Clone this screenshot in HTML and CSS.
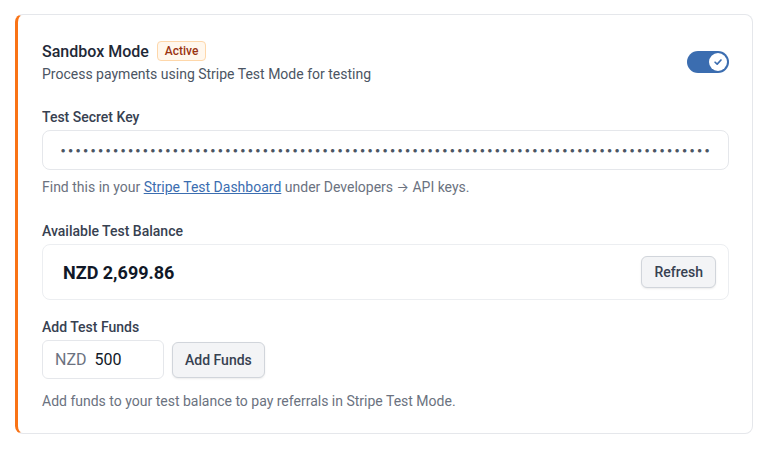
FILE: index.html
```html
<!DOCTYPE html>
<html lang="en">
<head>
    <meta charset="UTF-8">
    <meta name="viewport" content="width=device-width, initial-scale=1.0">
    <title>Sandbox Mode</title>
    <link rel="stylesheet" href="styles.css">
</head>
<body>
    <div class="card">
        <div class="head">
            <div>
                <div class="title-row">
                    <span class="title">Sandbox Mode</span>
                    <span class="badge">Active</span>
                </div>
                <p class="sub">Process payments using Stripe Test Mode for testing</p>
            </div>
            <label class="toggle">
                <span class="knob">
                    <svg width="10" height="10" viewBox="0 0 12 12"><path d="M2.5 6.3 L5 8.6 L9.6 3.6" fill="none" stroke="#3b6db0" stroke-width="2" stroke-linecap="round" stroke-linejoin="round"/></svg>
                </span>
            </label>
        </div>

        <div class="field">
            <div class="label">Test Secret Key</div>
            <input type="password" class="key" value="sk_test_51AbCdEfGhIjKlMnOpQrStUvWxYz0123456789abcdefghijklmnopqrstuvwxyzABCDEFGHIJKLMNOPQRSTUVWXYZ0123456" readonly>
            <p class="hint">Find this in your <a href="#">Stripe Test Dashboard</a> under Developers <span class="arrow">→</span> API keys.</p>
        </div>

        <div class="field balance-field">
            <div class="label">Available Test Balance</div>
            <div class="balance">
                <span class="amount">NZD 2,699.86</span>
                <button type="button" class="btn">Refresh</button>
            </div>
        </div>

        <div class="field funds">
            <div class="label">Add Test Funds</div>
            <div class="row">
                <div class="money">
                    <span class="cur">NZD</span>
                    <input type="text" value="500">
                </div>
                <button type="button" class="btn">Add Funds</button>
            </div>
            <p class="hint">Add funds to your test balance to pay referrals in Stripe Test Mode.</p>
        </div>
    </div>
</body>
</html>
```

FILE: styles.css
```css
body {
    margin: 0;
    padding: 14px 14px 0 15px;
    background-color: #fff;
    color: #1f2937;
    font-family: Roboto, "Noto Sans", sans-serif;
    font-size: 14px;
}
.card {
    border: 1px solid #e5e7eb;
    border-left: 3px solid #f97316;
    border-radius: 8px;
    padding: 24px 23px 23px 24px;
    background-color: #fff;
}
.head {
    display: flex;
    justify-content: space-between;
    align-items: center;
}
.title-row {
    display: flex;
    align-items: center;
    gap: 8px;
    height: 22px;
    margin-top: 1px;
}
.title {
    font-size: 16px;
    font-weight: 500;
    color: #1f2937;
}
.badge {
    font-size: 12px;
    font-weight: 500;
    color: #9a3412;
    background-color: #fff7ed;
    border: 1px solid #fed7aa;
    border-radius: 4px;
    padding: 1px 7px;
    line-height: 16px;
}
.sub {
    margin: 2px 0 0;
    line-height: 20px;
    color: #4b5563;
}
.toggle {
    width: 42px;
    height: 22px;
    border-radius: 11px;
    background-color: #3b6db0;
    display: flex;
    align-items: center;
    justify-content: flex-end;
    padding: 0 2px;
    box-sizing: border-box;
    margin-top: 1px;
}
.knob {
    width: 18px;
    height: 18px;
    border-radius: 50%;
    background-color: #fff;
    display: flex;
    align-items: center;
    justify-content: center;
}
.field {
    margin-top: 23px;
}
.label {
    font-weight: 500;
    color: #374151;
    line-height: 20px;
    margin-bottom: 3px;
}
.key {
    display: block;
    width: 100%;
    box-sizing: border-box;
    height: 40px;
    border: 1px solid #e5e7eb;
    border-radius: 8px;
    padding: 0 16px 0 17px;
    font-family: Inter, sans-serif;
    font-size: 11px;
    color: #4b5563;
    letter-spacing: 1.3px;
}
.hint {
    margin: 8px 0 0;
    line-height: 18px;
    color: #6b7280;
}
.hint a {
    color: #3b6db0;
}
.arrow {
    font-family: Inter, sans-serif;
    font-size: 13px;
}
.balance-field {
    margin-top: 25px;
}
.balance {
    display: flex;
    justify-content: space-between;
    align-items: center;
    border: 1px solid #eceef1;
    border-radius: 8px;
    padding: 11px 12px 11px 20px;
}
.amount {
    font-size: 18px;
    font-weight: 700;
    color: #111827;
}
.btn {
    height: 32px;
    padding: 0 12px;
    font-family: inherit;
    font-size: 14px;
    font-weight: 500;
    color: #374151;
    background-color: #f3f4f6;
    border: 1px solid #d1d5db;
    border-radius: 6px;
    box-shadow: 0 1px 2px rgba(0, 0, 0, 0.08);
}
.funds {
    margin-top: 17px;
}
.row {
    display: flex;
    align-items: center;
    gap: 8px;
}
.row .btn {
    height: 36px;
}
.money {
    display: flex;
    align-items: center;
    width: 122px;
    height: 39px;
    box-sizing: border-box;
    border: 1px solid #e5e7eb;
    border-radius: 6px;
    padding: 0 12px;
}
.cur {
    font-size: 16px;
    color: #6b7280;
    margin-right: 8px;
}
.money input {
    border: none;
    outline: none;
    width: 50px;
    padding: 0;
    font-family: inherit;
    font-size: 16px;
    color: #111827;
}
.funds .hint {
    margin-top: 13px;
}
```
